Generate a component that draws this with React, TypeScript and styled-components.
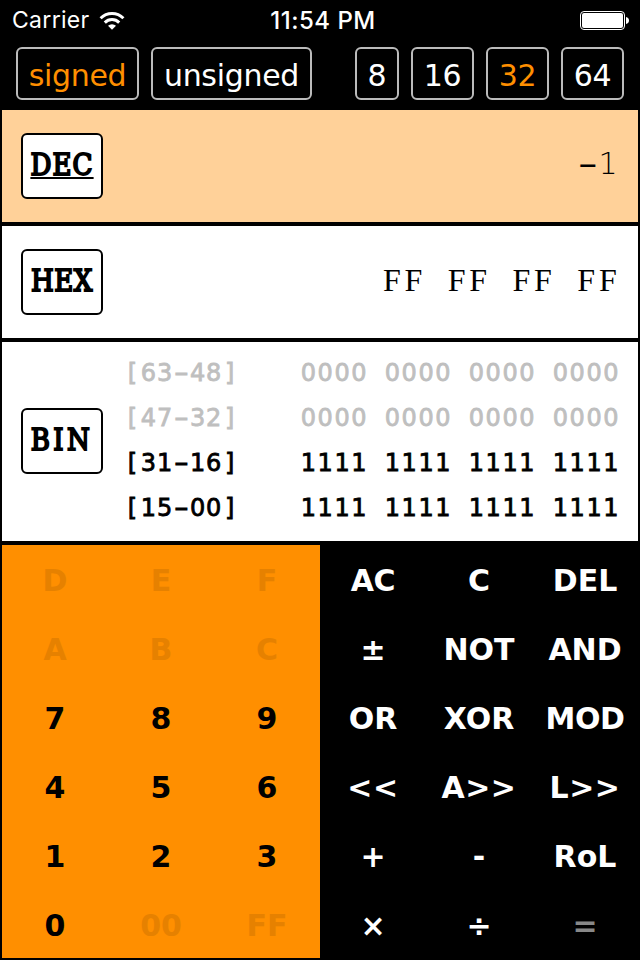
import React from "react";
import styled, { createGlobalStyle } from "styled-components";

const Global = createGlobalStyle`
  * { box-sizing: border-box; }
  body { margin: 0; background: #000; }
`;

const Screen = styled.main`
  width: 640px;
  height: 960px;
  overflow: hidden;
  display: flex;
  flex-direction: column;
  padding: 0 2px 2px;
  background: #000;
  color: #000;
`;

const StatusBar = styled.header`
  height: 47px;
  padding: 0 9px 6px 10px;
  display: grid;
  grid-template-columns: 1fr auto 1fr;
  align-items: center;
  color: #fff;
  font: 400 23px/41px Inter, sans-serif;
`;

const Carrier = styled.div`
  display: flex;
  align-items: center;
  gap: 9px;
  letter-spacing: 0.3px;
`;

const Clock = styled.div`
  font-size: 24px;
  font-weight: 500;
  letter-spacing: 0.5px;
  padding-left: 5px;
`;

const Battery = styled.svg`
  justify-self: end;
`;

const Toolbar = styled.nav`
  height: 63px;
  display: flex;
  align-items: flex-start;
  gap: 12px;
  padding: 0 14px;
`;

const Toggle = styled.button<{ $w: number; $on?: boolean; $push?: boolean }>`
  width: ${(p) => p.$w}px;
  height: 53px;
  margin: 0 0 0 ${(p) => (p.$push ? "auto" : "0")};
  padding: 5px 0 0;
  border: 2px solid #bbb;
  border-radius: 6px;
  background: #000;
  color: ${(p) => (p.$on ? "#ff8f00" : "#fff")};
  font: 30px/44px "DejaVu Sans", sans-serif;
  letter-spacing: -0.3px;
`;

const Panel = styled.section<{ $h: number; $active?: boolean; $lift?: number }>`
  height: ${(p) => p.$h}px;
  flex: none;
  margin-bottom: 4px;
  padding: 0 19px ${(p) => p.$lift ?? 0}px;
  display: flex;
  align-items: center;
  justify-content: space-between;
  background: ${(p) => (p.$active ? "#ffd199" : "#fff")};
`;

const BaseButton = styled.button<{ $spacing: number; $active?: boolean }>`
  width: 82px;
  height: 66px;
  flex: none;
  padding: 0 0 1px;
  border: 2px solid #000;
  border-radius: 6px;
  background: #fff;
  color: #000;
  font: 29px/60px "DejaVu Serif Condensed", "DejaVu Serif", serif;
  font-stretch: condensed;
  -webkit-text-stroke: 1.8px #000;
  letter-spacing: ${(p) => p.$spacing}px;
  white-space: nowrap;
  display: flex;
  justify-content: center;
  text-decoration: ${(p) => (p.$active ? "underline" : "none")};
  text-decoration-thickness: 2px;
  text-underline-offset: 2px;
`;

const DecValue = styled.output`
  font: 200 30px/40px "DejaVu Sans", sans-serif;
  display: flex;
  padding: 0 1.5px 4px 0;
`;

const WideDash = styled.span<{ $w: number; $s: number }>`
  display: inline-block;
  width: ${(p) => p.$w}px;
  text-align: center;
  font-weight: 400;
  letter-spacing: 0;
  transform: scaleX(${(p) => p.$s});
`;

const HexValue = styled.output`
  font: 32px/40px "Liberation Serif", serif;
  letter-spacing: 3.8px;
  word-spacing: 9.8px;
  margin-right: -1.5px;
  padding-bottom: 4px;
`;

const BitTable = styled.div`
  width: 496px;
  height: 179px;
  margin-right: -1px;
  display: flex;
  flex-direction: column;
`;

const BitRow = styled.div<{ $dim?: boolean }>`
  height: 44.75px;
  display: flex;
  justify-content: space-between;
  align-items: center;
  color: ${(p) => (p.$dim ? "#bfbfbf" : "#000")};
  font: 24px/44px "DejaVu Sans", sans-serif;
  letter-spacing: 1.53px;
  -webkit-text-stroke: 0.8px;
  white-space: nowrap;
`;

const BitRange = styled.span`
  padding-left: 1px;
  letter-spacing: 0.9px;
`;

const Bracket = styled.span`
  display: inline-block;
  width: 15.8px;
  text-align: center;
`;

const Bits = styled.span`
  word-spacing: 7.64px;
`;

const Keypad = styled.div`
  height: 413px;
  display: grid;
  grid-template-columns: 318px 318px;
`;

const KeyGroup = styled.div<{ $dark?: boolean }>`
  display: grid;
  grid-template: repeat(6, 69px) / repeat(3, 106px);
  height: 413px;
  overflow: hidden;
  background: ${(p) => (p.$dark ? "#000" : "#ff8f00")};
  color: ${(p) => (p.$dark ? "#fff" : "#000")};
`;

const Key = styled.button<{ $color?: string; $spacing?: number }>`
  border: 0;
  padding: 2px 0 0;
  background: none;
  color: ${(p) => p.$color ?? "inherit"};
  font: bold 30px/67px "DejaVu Sans", sans-serif;
  letter-spacing: ${(p) => p.$spacing ?? 0}px;
  white-space: nowrap;
  display: flex;
  justify-content: center;
`;

const digits = ["D", "E", "F", "A", "B", "C", "7", "8", "9", "4", "5", "6", "1", "2", "3", "0", "00", "FF"];
const disabled = new Set(["A", "B", "C", "D", "E", "F", "00", "FF"]);

const operations: [string, number][] = [
  ["AC", -0.3], ["C", 0], ["DEL", 0],
  ["±", 0], ["NOT", 0], ["AND", 0],
  ["OR", 0], ["XOR", 0], ["MOD", -0.5],
  ["<<", 0.6], ["A>>", 0.5], ["L>>", 0.5],
  ["+", 0], ["-", 0], ["RoL", 0],
  ["×", 0], ["÷", 0], ["=", 0],
];

const bitRows = [
  { from: "63", to: "48", bits: "0000 0000 0000 0000", dim: true },
  { from: "47", to: "32", bits: "0000 0000 0000 0000", dim: true },
  { from: "31", to: "16", bits: "1111 1111 1111 1111", dim: false },
  { from: "15", to: "00", bits: "1111 1111 1111 1111", dim: false },
];

export default function App() {
  return (
    <>
      <Global />
      <Screen>
        <StatusBar>
          <Carrier>
            Carrier
            <svg width="26" height="20" viewBox="0 0 26 20" fill="none" stroke="#fff" strokeWidth="3">
              <path d="M1.6 7.2a16.2 16.2 0 0 1 22.8 0" />
              <path d="M5.8 11.6a10.2 10.2 0 0 1 14.4 0" />
              <path d="M9 14.8a5.7 5.7 0 0 1 8 0l-4 4z" fill="#fff" stroke="none" />
            </svg>
          </Carrier>
          <Clock>11:54 PM</Clock>
          <Battery width="49" height="20" viewBox="0 0 49 20">
            <rect x="0.5" y="0.5" width="44" height="18" rx="3.5" fill="none" stroke="#fff" />
            <rect x="2" y="2" width="41" height="15" rx="2" fill="#fff" />
            <path d="M46 6c2 .5 3 1.8 3 3.500s-1 3-3 3.500z" fill="#fff" />
          </Battery>
        </StatusBar>
        <Toolbar>
          <Toggle $w={123} $on>signed</Toggle>
          <Toggle $w={161}>unsigned</Toggle>
          <Toggle $w={44} $push>8</Toggle>
          <Toggle $w={63}>16</Toggle>
          <Toggle $w={63} $on>32</Toggle>
          <Toggle $w={63}>64</Toggle>
        </Toolbar>
        <Panel $h={112} $active>
          <BaseButton $spacing={1.1} $active>DEC</BaseButton>
          <DecValue><WideDash $w={21.6} $s={1.9}>-</WideDash>1</DecValue>
        </Panel>
        <Panel $h={112}>
          <BaseButton $spacing={0.5}>HEX</BaseButton>
          <HexValue>FF FF FF FF</HexValue>
        </Panel>
        <Panel $h={199} $lift={2}>
          <BaseButton $spacing={3.4}>BIN</BaseButton>
          <BitTable>
            {bitRows.map((row) => (
              <BitRow key={row.from} $dim={row.dim}>
                <BitRange>
                  <Bracket>[</Bracket>{row.from}
                  <WideDash $w={16.8} $s={1.7}>-</WideDash>
                  {row.to}<Bracket>]</Bracket>
                </BitRange>
                <Bits>{row.bits}</Bits>
              </BitRow>
            ))}
          </BitTable>
        </Panel>
        <Keypad>
          <KeyGroup>
            {digits.map((label) => (
              <Key key={label} $color={disabled.has(label) ? "#e68100" : undefined}>{label}</Key>
            ))}
          </KeyGroup>
          <KeyGroup $dark>
            {operations.map(([label, spacing]) => (
              <Key key={label} $spacing={spacing} $color={label === "=" ? "#888" : undefined}>{label}</Key>
            ))}
          </KeyGroup>
        </Keypad>
      </Screen>
    </>
  );
}
